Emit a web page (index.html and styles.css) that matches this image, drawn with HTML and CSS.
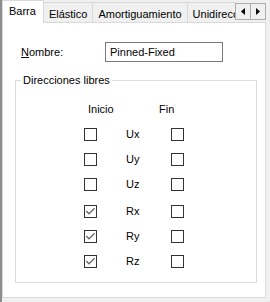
FILE: index.html
```html
<!DOCTYPE html>
<html lang="es">
<head>
    <meta charset="UTF-8" />
    <title>Barra</title>
    <link rel="stylesheet" href="styles.css">
</head>
<body>
    <div class="window">
        <div class="tabbar">
            <div class="tabs">
                <div class="tab active">Barra</div>
                <div class="tab">Elástico</div>
                <div class="tab">Amortiguamiento</div>
                <div class="tab">Unidireccional</div>
            </div>
            <div class="scroll">
                <button class="scroll-btn"><svg width="4" height="7" viewBox="0 0 4 7"><path d="M4 0 L0 3.5 L4 7 Z" fill="#000"/></svg></button>
                <button class="scroll-btn"><svg width="4" height="7" viewBox="0 0 4 7"><path d="M0 0 L4 3.5 L0 7 Z" fill="#000"/></svg></button>
            </div>
        </div>

        <div class="panel">
            <div class="field-row">
                <label class="field-label"><u>N</u>ombre:</label>
                <input class="text-input" type="text" value="Pinned-Fixed" />
            </div>

            <fieldset class="group">
                <legend>Direcciones libres</legend>
                <div class="dir-head"><span>Inicio</span><span>Fin</span></div>
                <div class="dir-grid">
                    <div class="dir-row"><span class="check"></span><span>Ux</span><span class="check"></span></div>
                    <div class="dir-row"><span class="check"></span><span>Uy</span><span class="check"></span></div>
                    <div class="dir-row"><span class="check"></span><span>Uz</span><span class="check"></span></div>
                    <div class="dir-row rot"><span class="check on"><svg width="11" height="11" viewBox="0 0 11 11"><path d="M1.2 5 L4 7.8 L9.6 2.3" fill="none" stroke="#6a6a6a" stroke-width="1.3"/></svg></span><span>Rx</span><span class="check"></span></div>
                    <div class="dir-row"><span class="check on"><svg width="11" height="11" viewBox="0 0 11 11"><path d="M1.2 5 L4 7.8 L9.6 2.3" fill="none" stroke="#6a6a6a" stroke-width="1.3"/></svg></span><span>Ry</span><span class="check"></span></div>
                    <div class="dir-row"><span class="check on"><svg width="11" height="11" viewBox="0 0 11 11"><path d="M1.2 5 L4 7.8 L9.6 2.3" fill="none" stroke="#6a6a6a" stroke-width="1.3"/></svg></span><span>Rz</span><span class="check"></span></div>
                </div>
            </fieldset>
        </div>
    </div>
</body>
</html>
```

FILE: styles.css
```css
body { margin: 0; font-family: "Liberation Sans", Arial, sans-serif; font-size: 11px; line-height: 13px; color: #000; background: #f0f0f0; }
.window { width: 270px; height: 302px; box-sizing: border-box; border-left: 2px solid #8c8c8c; }

.tabbar { display: flex; height: 23px; }
.tabs { display: flex; align-items: flex-end; flex: 1; min-width: 0; overflow: hidden; }
.tab { flex: none; height: 20px; box-sizing: border-box; padding: 5px 5px 0; margin-bottom: 1px; margin-left: -1px; background: #f0f0f0; border: 1px solid #d9d9d9; border-bottom: none; white-space: nowrap; }
.tab:first-child { margin-left: 0; }
.tab.active { position: relative; z-index: 1; height: 23px; margin-bottom: 0; padding: 4px 7px 0 6px; background: #fff; }
.scroll { display: flex; align-items: flex-start; padding-top: 3px; margin-right: 4px; }
.scroll-btn { width: 16px; height: 17px; margin: 0 0 0 -1px; padding: 0; display: flex; align-items: center; justify-content: center; background: #f0f0f0; border: 1px solid #adadad; }

.panel { height: 276px; box-sizing: border-box; margin: -1px 4px 0 0; background: #fff; border: 1px solid #d9d9d9; }

.field-row { display: flex; align-items: center; margin-top: 19px; padding-left: 18px; }
.field-label { width: 84px; }
.text-input { width: 118px; height: 20px; box-sizing: border-box; margin: 0; padding: 0 4px; font: inherit; border: 1px solid #7a7a7a; }

.group { margin: 12px 8px 0 12px; padding: 0 0 14px; border: 1px solid #dcdcdc; }
.group legend { margin-left: 5px; padding: 0 2px; }
.dir-head { display: grid; grid-template-columns: 71px auto; padding-left: 72px; margin-top: 16px; }
.dir-grid { display: grid; row-gap: 12px; padding-left: 68px; margin-top: 12px; }
.dir-row { display: grid; grid-template-columns: 42px 45px 13px; align-items: center; height: 13px; }
.dir-row.rot { margin-top: 2px; }
.check { width: 13px; height: 13px; box-sizing: border-box; border: 1px solid #333; background: #fff; }
.check svg { display: block; }
```
